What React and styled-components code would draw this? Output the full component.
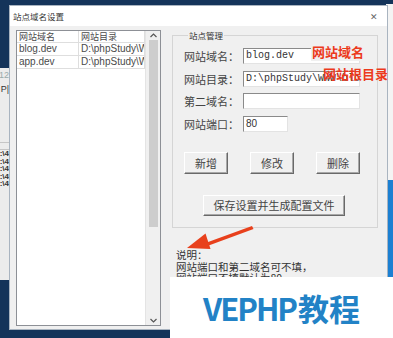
import styled, { createGlobalStyle } from "styled-components"

const GlobalStyle = createGlobalStyle`
  html, body { margin: 0; padding: 0; }
  body { font-family: "Noto Sans CJK SC", "Noto Sans", sans-serif; }
`

const sites = [
  { id: 1, name: "blog.dev", dir: "D:\\phpStudy\\WWW\\blog" },
  { id: 2, name: "app.dev", dir: "D:\\phpStudy\\WWW\\app" },
]

const fields = [
  { id: 1, label: "网站域名：", value: "blog.dev", width: 117, mono: true },
  { id: 2, label: "网站目录：", value: "D:\\phpStudy\\WWW\\blog", width: 117, mono: true },
  { id: 3, label: "第二域名：", value: "", width: 117, mono: true },
  { id: 4, label: "网站端口：", value: "80", width: 45, mono: false },
]

const Chevron = ({ down }) => (
  <svg width="7" height="5" viewBox="0 0 7 5">
    <path d={down ? "M0.5 1 L3.5 4 L6.5 1" : "M0.5 4 L3.5 1 L6.5 4"} fill="none" stroke="#555" strokeWidth="1.2" />
  </svg>
)

const App = () => {
  return (
    <>
      <GlobalStyle />
      <Desktop>
        <BackWindow>
          <BackText $color="#9aa">12</BackText>
          <BackText $color="#333" $gap={4}>P|</BackText>
          <BackLine $top={48} />
          <BackLine $top={6} />
          {[1, 2, 3, 4, 5].map((n) => (
            <BackText key={n} $color="#333" $small>:\4</BackText>
          ))}
        </BackWindow>
        <RightWindow />
        <RightStrip />

        <Dialog>
          <TitleBar>
            <Title>站点域名设置</Title>
            <Close>✕</Close>
          </TitleBar>
          <Body>
            <ListBox>
              <Table>
                <Row $head>
                  <Cell $head>网站域名</Cell>
                  <Cell $head>网站目录</Cell>
                </Row>
                {sites.map((s) => (
                  <Row key={s.id}>
                    <Cell>{s.name}</Cell>
                    <Cell>{s.dir}</Cell>
                  </Row>
                ))}
              </Table>
              <ScrollBar>
                <ScrollArrow><Chevron /></ScrollArrow>
                <Thumb />
                <Track />
                <ScrollArrow><Chevron down /></ScrollArrow>
              </ScrollBar>
            </ListBox>

            <RightColumn>
              <GroupBox>
                <Legend>站点管理</Legend>
                <Form>
                  {fields.map((f) => (
                    <FormRow key={f.id}>
                      <Label>{f.label}</Label>
                      <Field $width={f.width} $mono={f.mono}>{f.value}</Field>
                    </FormRow>
                  ))}
                </Form>
                <Buttons>
                  <Button>新增</Button>
                  <Button>修改</Button>
                  <Button>删除</Button>
                </Buttons>
                <SaveButton>保存设置并生成配置文件</SaveButton>
              </GroupBox>
              <Notes>
                <p>说明：</p>
                <p>网站端口和第二域名可不填，</p>
                <p>网站端口不填默认为80</p>
              </Notes>
            </RightColumn>
          </Body>
        </Dialog>

        <Note $left={311} $top={43} $bg>网站域名</Note>
        <Note $left={322} $top={65}>网站根目录</Note>
        <Arrow width="76" height="32" viewBox="0 0 76 32">
          <path d="M24 21.5 L72 4 L73.5 7 L26 24.5 Z" fill="#e8401c" />
          <path d="M7 26 L30.5 27 L25.5 11.5 Z" fill="#e8401c" />
        </Arrow>

        <Watermark>
          <Brand><Latin>VEPHP</Latin>教程</Brand>
        </Watermark>
      </Desktop>
    </>
  )
}

export default App

const Desktop = styled.div`
  position: relative;
  width: 393px;
  height: 338px;
  overflow: hidden;
  background: #14345a;
`

const BackWindow = styled.div`
  position: absolute;
  left: -60px;
  top: 68px;
  width: 69px;
  height: 212px;
  background: #ececec;
  display: flex;
  flex-direction: column;
  align-items: flex-end;
  padding-top: 2px;
  box-sizing: border-box;
  font-family: "Liberation Sans", sans-serif;
`

const BackText = styled.span`
  font-size: ${(p) => (p.$small ? 8 : 9)}px;
  line-height: ${(p) => (p.$small ? 7.5 : 10)}px;
  color: ${(p) => p.$color};
  margin-top: ${(p) => p.$gap || 0}px;
  font-weight: ${(p) => (p.$small ? 700 : 400)};
`

const BackLine = styled.div`
  width: 100%;
  height: 1px;
  background: #c6c6c6;
  margin-top: ${(p) => p.$top}px;
`

const RightWindow = styled.div`
  position: absolute;
  left: 386px;
  top: 4px;
  width: 20px;
  height: 176px;
  background: #f4f4f4;
`

const RightStrip = styled.div`
  position: absolute;
  left: 386px;
  top: 180px;
  width: 20px;
  height: 100px;
  background: #1c80d2;
`

const Dialog = styled.div`
  position: absolute;
  left: 9px;
  top: 5px;
  width: 379px;
  height: 325px;
  display: flex;
  flex-direction: column;
  border: 1px solid #a9b4c0;
  box-sizing: border-box;
  background: #f0f0f0;
`

const TitleBar = styled.div`
  height: 20px;
  display: flex;
  align-items: center;
  justify-content: space-between;
  padding: 0 9px 0 3px;
  background: #fff;
`

const Title = styled.span`
  font-size: 8.5px;
  color: #333;
`

const Close = styled.span`
  font-size: 9px;
  color: #666;
`

const Body = styled.div`
  flex: 1;
  display: flex;
  gap: 11px;
  padding: 4px 0 3px 6px;
`

const ListBox = styled.div`
  width: 145px;
  display: flex;
  border: 1px solid #8d9096;
  background: #fff;
  box-sizing: border-box;
`

const Table = styled.div`
  flex: 1;
  display: flex;
  flex-direction: column;
`

const Row = styled.div`
  display: grid;
  grid-template-columns: 62px 66px;
  height: ${(p) => (p.$head ? 11 : 12)}px;
  border-bottom: 1px solid #dedede;
`

const Cell = styled.div`
  border-right: 1px solid #dedede;
  padding-left: 2px;
  overflow: hidden;
  white-space: nowrap;
  font-family: ${(p) => (p.$head ? '"Noto Sans CJK SC", sans-serif' : '"Liberation Sans", sans-serif')};
  font-size: ${(p) => (p.$head ? 9 : 10)}px;
  line-height: ${(p) => (p.$head ? 11 : 12)}px;
  color: #4a4a4a;
`

const ScrollBar = styled.div`
  width: 15px;
  display: flex;
  flex-direction: column;
  align-items: center;
  background: #f0f0f0;
  border-left: 1px solid #e4e4e4;
`

const ScrollArrow = styled.div`
  height: 9px;
  display: flex;
  align-items: center;
  justify-content: center;
`

const Thumb = styled.div`
  width: 9px;
  height: 187px;
  background: #cdcdcd;
`

const Track = styled.div`
  flex: 1;
`

const RightColumn = styled.div`
  display: flex;
  flex-direction: column;
`

const GroupBox = styled.fieldset`
  margin: 0;
  width: 206px;
  height: 198px;
  box-sizing: border-box;
  border: 1px solid #d5d5d5;
  padding: 8px 0 0 11px;
  display: flex;
  flex-direction: column;
  align-items: flex-start;
`

const Legend = styled.legend`
  padding: 0 1px;
  margin-left: 4px;
  font-size: 8.5px;
  line-height: 10px;
  color: #333;
`

const Form = styled.div`
  display: flex;
  flex-direction: column;
  gap: 6.5px;
`

const FormRow = styled.div`
  display: flex;
  align-items: center;
  height: 16px;
`

const Label = styled.span`
  width: 59px;
  font-size: 11px;
  color: #444;
  white-space: nowrap;
`

const Field = styled.div`
  width: ${(p) => p.$width}px;
  height: 16px;
  box-sizing: border-box;
  background: #fff;
  border: 1px solid;
  border-color: #8a8a8a #e3e3e3 #e3e3e3 #8a8a8a;
  padding-left: 2px;
  overflow: hidden;
  white-space: nowrap;
  font-family: ${(p) => (p.$mono ? '"Liberation Mono", monospace' : '"Liberation Sans", sans-serif')};
  font-size: 10px;
  line-height: 14px;
  color: #333;
`

const Buttons = styled.div`
  display: flex;
  gap: 22px;
  margin-top: 20px;
`

const Button = styled.div`
  width: 44px;
  height: 22px;
  box-sizing: border-box;
  display: flex;
  align-items: center;
  justify-content: center;
  background: #f0f0f0;
  border: 1px solid;
  border-color: #fff #696969 #696969 #fff;
  box-shadow: inset -1px -1px #a8a8a8;
  font-size: 11px;
  color: #444;
`

const SaveButton = styled(Button)`
  width: 142px;
  height: 21px;
  margin: 21px 0 0 19px;
`

const Notes = styled.div`
  margin-top: 21px;
  padding-left: 4px;
  font-size: 10.5px;
  line-height: 11.5px;
  color: #333;
  p { margin: 0; }
`

const Note = styled.span`
  position: absolute;
  left: ${(p) => p.$left}px;
  top: ${(p) => p.$top}px;
  padding: 0 1px;
  background: ${(p) => (p.$bg ? "#f0f0f0" : "transparent")};
  color: #ec3a1c;
  font-size: 13px;
  font-weight: 700;
  line-height: 18px;
`

const Arrow = styled.svg`
  position: absolute;
  left: 180px;
  top: 222px;
`

const Watermark = styled.div`
  position: absolute;
  left: 170px;
  top: 277px;
  right: 0;
  bottom: 0;
  background: #fff;
  display: flex;
  align-items: center;
  justify-content: center;
`

const Brand = styled.span`
  font-size: 31px;
  font-weight: 700;
  color: #2282c6;
  line-height: 1;
`

const Latin = styled.span`
  letter-spacing: -2px;
  margin-right: 2px;
`
